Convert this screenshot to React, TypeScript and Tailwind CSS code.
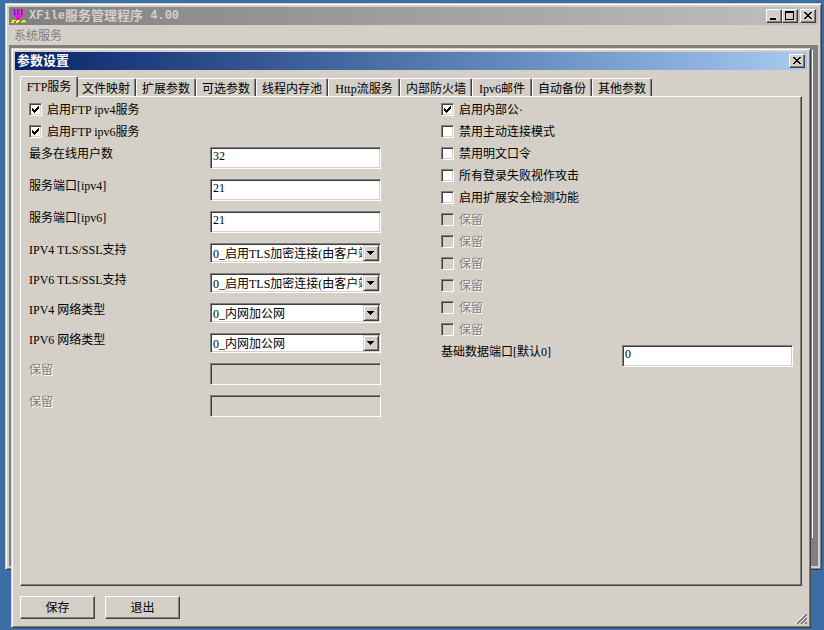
import { useState } from "react";

const raised =
  "border border-t-white border-l-white border-r-[#404040] border-b-[#404040] bg-[#d4d0c8] shadow-[inset_-1px_-1px_#808080]";
const sunken =
  "border border-t-[#808080] border-l-[#808080] border-r-white border-b-white shadow-[inset_1px_1px_#404040,inset_-1px_-1px_#d4d0c8]";
const windowFrame =
  "border border-t-[#d4d0c8] border-l-[#d4d0c8] border-r-[#404040] border-b-[#404040] bg-[#d4d0c8] p-[3px] shadow-[inset_1px_1px_#fff,inset_-1px_-1px_#808080]";
const disabledText = "text-[#808080] [text-shadow:1px_1px_#fff]";

const tabs = [
  { label: "FTP服务", width: "w-[58px]" },
  { label: "文件映射", width: "w-[60px]" },
  { label: "扩展参数", width: "w-[60px]" },
  { label: "可选参数", width: "w-[60px]" },
  { label: "线程内存池", width: "w-[72px]" },
  { label: "Http流服务", width: "w-[72px]" },
  { label: "内部防火墙", width: "w-[72px]" },
  { label: "Ipv6邮件", width: "w-[60px]" },
  { label: "自动备份", width: "w-[60px]" },
  { label: "其他参数", width: "w-[60px]" },
];

const tlsOptions = ["0_启用TLS加密连接(由客户端决定)", "1_禁用TLS加密连接"];
const netOptions = ["0_内网加公网", "1_内网", "2_公网"];

const options = [
  { label: "启用内部公·", checked: true },
  { label: "禁用主动连接模式" },
  { label: "禁用明文口令" },
  { label: "所有登录失败视作攻击" },
  { label: "启用扩展安全检测功能" },
  { label: "保留", disabled: true },
  { label: "保留", disabled: true },
  { label: "保留", disabled: true },
  { label: "保留", disabled: true },
  { label: "保留", disabled: true },
  { label: "保留", disabled: true },
];

function AppIcon() {
  return (
    <svg width="16" height="16" viewBox="0 0 16 16" shapeRendering="crispEdges" aria-hidden="true">
      <path d="M3 1h2v6h1v1h1V1h2v7h1V7h1V1h2v1h-1v6h-1v1h-1v1H9v2H7v-2H5V9H4V8H3z" fill="#f0f" />
      <path d="M2 1h1v1h1v5H3V2H2zM6 1h1v6H6zM10 1h1v6h-1zM6 10h1v2H6z" fill="#8000ff" />
      <path d="M1 12h4v1h1v-1h3v1h3v-1h2v1h1v1h-3v1h-1v-1H7v1H5v-1H3v1H0v-1h1z" fill="#ff0" />
      <path d="M3 13h2v1H3zM8 13h2v1H8z" fill="#808000" />
    </svg>
  );
}

function CaptionButton({ kind, label }: { kind: "min" | "max" | "close"; label: string }) {
  return (
    <button
      type="button"
      aria-label={label}
      className={`flex h-[14px] w-4 shrink-0 items-center justify-center ${raised}`}
    >
      <svg width="14" height="12" viewBox="0 0 14 12" shapeRendering="crispEdges">
        {kind === "min" && <path d="M3 8h6v2H3z" />}
        {kind === "max" && <path fillRule="evenodd" d="M2 1h9v9H2zM3 3v6h7V3z" />}
        {kind === "close" && (
          <path d="M3 2h2v1h1v1h2V3h1V2h2v1h-1v1H9v1H8v1h1v1h1v1h1v1H9V8H8V7H6v1H5v1H3V8h1V7h1V6h1V5H5V4H4V3H3z" />
        )}
      </svg>
    </button>
  );
}

function CheckRow({
  label,
  checked,
  disabled,
}: {
  label: string;
  checked?: boolean;
  disabled?: boolean;
}) {
  return (
    <label className={`flex h-[22px] items-center gap-[5px] ${disabled ? disabledText : ""}`}>
      <span className="relative flex">
        <input
          type="checkbox"
          defaultChecked={checked}
          disabled={disabled}
          className={`peer size-[13px] appearance-none ${sunken} ${disabled ? "bg-[#d4d0c8]" : "bg-white"}`}
        />
        <svg
          width="7"
          height="7"
          viewBox="0 0 7 7"
          shapeRendering="crispEdges"
          className="pointer-events-none absolute top-[3px] left-[3px] hidden peer-checked:block"
        >
          <path d="M0 2h1v1h1v1h1V3h1V2h1V1h1V0h1v3H6v1H5v1H4v1H3v1H2V6H1V5H0z" />
        </svg>
      </span>
      <span className="pt-0.5">{label}</span>
    </label>
  );
}

function TextRow({
  id,
  label,
  value,
  disabled,
}: {
  id: string;
  label: string;
  value?: string;
  disabled?: boolean;
}) {
  return (
    <div className="flex items-start justify-between">
      <label htmlFor={id} className={`leading-[14px] ${disabled ? disabledText : ""}`}>
        {label}
      </label>
      <input
        id={id}
        type="text"
        defaultValue={value}
        disabled={disabled}
        className={`h-[22px] w-[171px] px-0.5 pb-1 ${sunken} ${disabled ? "bg-[#d4d0c8]" : "bg-white"}`}
      />
    </div>
  );
}

function SelectRow({ id, label, items }: { id: string; label: string; items: string[] }) {
  return (
    <div className="flex items-start justify-between">
      <label htmlFor={id} className="leading-[14px]">
        {label}
      </label>
      <div className="relative flex w-[171px]">
        <select
          id={id}
          className={`h-5 w-full appearance-none overflow-hidden bg-white pt-0.5 pr-[18px] pl-0.5 ${sunken}`}
        >
          {items.map((item) => (
            <option key={item}>{item}</option>
          ))}
        </select>
        <span
          className={`pointer-events-none absolute top-0.5 right-0.5 flex size-4 items-center justify-center border border-t-[#d4d0c8] border-l-[#d4d0c8] border-r-[#404040] border-b-[#404040] bg-[#d4d0c8] shadow-[inset_1px_1px_#fff,inset_-1px_-1px_#808080]`}
        >
          <svg width="8" height="4" viewBox="0 0 8 4" shapeRendering="crispEdges">
            <path d="M0 0h7v1H6v1H5v1H4v1H3V3H2V2H1V1H0z" />
          </svg>
        </span>
      </div>
    </div>
  );
}

function MainWindow() {
  return (
    <div className={`absolute top-[3px] right-0.5 left-[5px] flex h-[567px] flex-col ${windowFrame}`}>
      <div className="flex h-[18px] shrink-0 items-center bg-linear-to-r from-[#808080] to-[#c0c0c0] px-0.5">
        <AppIcon />
        <h1 className="flex flex-1 items-center pl-0.5 text-[13px] font-bold text-[#d4d0c8]">
          <span className="font-['Liberation_Mono',monospace] text-xs">XFile</span>
          服务管理程序
          <span className="font-['Liberation_Mono',monospace] text-xs whitespace-pre"> 4.00</span>
        </h1>
        <CaptionButton kind="min" label="最小化" />
        <CaptionButton kind="max" label="最大化" />
        <span className="w-0.5" />
        <CaptionButton kind="close" label="关闭" />
      </div>
      <nav className="flex h-5 shrink-0 items-center pt-0.5 pl-[5px]">
        <button type="button" disabled className="text-[#808080]">
          系统服务
        </button>
      </nav>
      <div className="flex flex-1 justify-end bg-[#808080] pt-[5px] pr-[5px] pb-7">
        <div className="w-px bg-white" />
      </div>
    </div>
  );
}

function SettingsDialog() {
  const [active, setActive] = useState(0);

  return (
    <div
      role="dialog"
      aria-labelledby="dialog-title"
      className={`absolute top-12 right-[13px] bottom-0.5 left-[11px] flex flex-col ${windowFrame}`}
    >
      <div className="flex h-[18px] shrink-0 items-center justify-between bg-linear-to-r from-[#0a246a] to-[#a6caf0] px-0.5">
        <h2 id="dialog-title" className="text-[13px] font-bold text-white">
          参数设置
        </h2>
        <CaptionButton kind="close" label="关闭" />
      </div>

      <div className="flex flex-1 flex-col px-[5px] pt-1.5 pb-[5px]">
        <div role="tablist" className="flex h-5 items-end">
          {tabs.map((tab, i) => (
            <button
              key={tab.label}
              type="button"
              role="tab"
              aria-selected={i === active}
              onClick={() => setActive(i)}
              className={`rounded-t-xs border-t border-r border-l border-t-white border-r-[#404040] border-l-white bg-[#d4d0c8] shadow-[inset_-1px_0_#808080] ${tab.width} ${
                i === active ? "relative z-10 -mb-px h-[21px]" : "h-[18px] pt-0.5"
              } ${i === 0 ? "-mr-0.5" : ""}`}
            >
              {tab.label}
            </button>
          ))}
        </div>

        <div
          role="tabpanel"
          className="grid flex-1 grid-cols-2 content-start gap-15 border-t border-r border-b border-l border-t-white border-r-[#404040] border-b-[#404040] border-l-white px-2 pt-px shadow-[inset_-1px_-1px_#808080]"
        >
          <div className="flex flex-col">
            <CheckRow label="启用FTP ipv4服务" checked />
            <CheckRow label="启用FTP ipv6服务" checked />
            <div className="mt-[5px] flex flex-col gap-2.5">
              <TextRow id="max-users" label="最多在线用户数" value="32" />
              <TextRow id="port-v4" label="服务端口[ipv4]" value="21" />
              <TextRow id="port-v6" label="服务端口[ipv6]" value="21" />
              <SelectRow id="tls-v4" label="IPV4 TLS/SSL支持" items={tlsOptions} />
              <SelectRow id="tls-v6" label="IPV6 TLS/SSL支持" items={tlsOptions} />
              <SelectRow id="net-v4" label="IPV4 网络类型" items={netOptions} />
              <SelectRow id="net-v6" label="IPV6 网络类型" items={netOptions} />
              <TextRow id="reserved-1" label="保留" disabled />
              <TextRow id="reserved-2" label="保留" disabled />
            </div>
          </div>

          <div className="flex flex-col">
            {options.map((option, i) => (
              <CheckRow key={i} {...option} />
            ))}
            <div className="mt-[5px]">
              <TextRow id="data-port" label="基础数据端口[默认0]" value="0" />
            </div>
          </div>
        </div>

        <div className="mt-2.5 flex gap-2.5">
          <button type="button" className={`h-[23px] w-[75px] ${raised}`}>
            保存
          </button>
          <button type="button" className={`h-[23px] w-[75px] ${raised}`}>
            退出
          </button>
        </div>
      </div>

      <svg width="12" height="12" viewBox="0 0 12 12" className="absolute right-[3px] bottom-[3px]" aria-hidden="true">
        <path d="M0 12L12 0M4 12l8-8M8 12l4-4" stroke="#fff" />
        <path d="M2 12L12 2M6 12l6-6M10 12l2-2" stroke="#808080" strokeWidth="2" />
      </svg>
    </div>
  );
}

export default function App() {
  return (
    <main className="relative min-h-screen overflow-hidden bg-[#3a6ea5] font-['Liberation_Serif','Noto_Sans_CJK_SC',serif] text-xs text-black">
      <MainWindow />
      <SettingsDialog />
    </main>
  );
}
